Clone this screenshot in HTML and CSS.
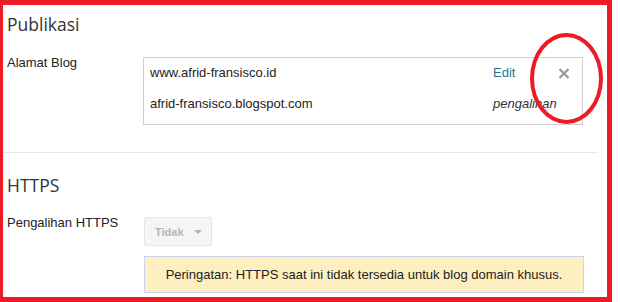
FILE: index.html
```html
<!DOCTYPE html>
<html lang="id">

<head>
    <meta charset="UTF-8" />
    <title>Publikasi</title>
    <link rel="stylesheet" href="styles.css">
</head>

<body>
    <div class="page">
        <section class="settings">
            <h1>Publikasi</h1>
            <div class="field-row">
                <div class="label">Alamat Blog</div>
                <div class="address-box">
                    <div class="address-row">
                        <span class="url">www.afrid-fransisco.id</span>
                        <a class="action" href="#">Edit</a>
                        <span class="remove">
                            <svg width="12" height="11" viewBox="0 0 12 11">
                                <path d="M1.5 1 L10.5 10 M10.5 1 L1.5 10" stroke="#9a9a9a" stroke-width="2.3" fill="none" />
                            </svg>
                        </span>
                    </div>
                    <div class="address-row">
                        <span class="url">afrid-fransisco.blogspot.com</span>
                        <em class="action">pengalihan</em>
                        <span></span>
                    </div>
                </div>
            </div>
        </section>

        <hr class="divider">

        <section class="settings">
            <h1 class="second">HTTPS</h1>
            <div class="field-row">
                <div class="label">Pengalihan HTTPS</div>
                <div class="field">
                    <div class="dropdown">Tidak <span class="caret"></span></div>
                    <div class="warning">Peringatan: HTTPS saat ini tidak tersedia untuk blog domain khusus.</div>
                </div>
            </div>
        </section>
    </div>

    <!-- annotation drawn over the screenshot -->
    <div class="mark-frame"></div>
    <div class="mark-circle"></div>
</body>

</html>
```

FILE: styles.css
```css
/* Base */
* {
    box-sizing: border-box;
}

body {
    margin: 0;
    width: 620px;
    height: 302px;
    overflow: hidden;
    position: relative;
    background: #fff;
    font-family: 'Liberation Sans', Arial, sans-serif;
    font-size: 13px;
    color: #222;
}

.page {
    width: 598px;
}

/* Sections */
.settings {
    padding-left: 7px;
}

.settings h1 {
    margin: 0;
    padding-top: 12px;
    font-family: 'Open Sans', sans-serif;
    font-size: 17.5px;
    line-height: 24px;
    font-weight: normal;
    color: #333;
}

.settings h1.second {
    padding-top: 20px;
}

.field-row {
    display: grid;
    grid-template-columns: 136px 441px;
    margin-top: 19px;
}

.settings h1.second + .field-row {
    margin-top: 18px;
}

.label {
    line-height: 16px;
}

/* Blog address box */
.address-box {
    margin-top: 2px;
    width: 440px;
    border: 1px solid #cfcfcf;
    padding: 7px 0 12px 6px;
    display: flex;
    flex-direction: column;
    gap: 15px;
}

.address-row {
    display: grid;
    grid-template-columns: 343px 65px 24px;
    line-height: 16px;
}

.action {
    color: #2b7594;
    text-decoration: none;
}

em.action {
    color: #333;
}

.remove {
    display: flex;
    padding-top: 3px;
}

.divider {
    margin: 27px 0 0;
    border: none;
    border-top: 1px solid #e6e6e6;
    height: 0;
}

/* HTTPS */
.field {
    margin-top: 2px;
    padding-left: 1px;
    display: flex;
    flex-direction: column;
    align-items: flex-start;
    gap: 10px;
}

.dropdown {
    width: 68px;
    height: 29px;
    display: flex;
    align-items: center;
    padding-left: 10px;
    background: #f5f5f5;
    border: 1px solid #e6e6e6;
    border-radius: 2px;
    font-size: 11px;
    font-weight: bold;
    color: #b5b5b5;
}

.caret {
    margin-left: 10px;
    margin-top: 1px;
    border-left: 4px solid transparent;
    border-right: 4px solid transparent;
    border-top: 4px solid #b0b0b0;
}

.warning {
    width: 440px;
    height: 37px;
    display: flex;
    align-items: center;
    justify-content: center;
    background: #feefc0;
    border: 1px solid #c9d3ef;
    color: #222;
}

/* Red annotation */
.mark-frame {
    position: absolute;
    left: -2px;
    top: 0;
    width: 614px;
    height: 302px;
    border: 5px solid #ed1c24;
    pointer-events: none;
}

.mark-circle {
    position: absolute;
    left: 530px;
    top: 33px;
    width: 73px;
    height: 91px;
    border: 4px solid #ed1c24;
    border-radius: 50%;
    pointer-events: none;
}
```
